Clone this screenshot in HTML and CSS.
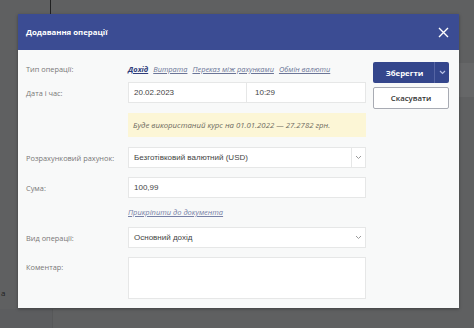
FILE: index.html
```html
<!DOCTYPE html>
<html>
<head>
  <title>Додавання операції</title>
  <link rel="stylesheet" href="styles.css">
</head>
<body>
  <div class="page">
    <div class="page-line"></div>
    <div class="page-band"></div>
    <div class="page-side"></div>
    <span class="page-text">а</span>
  </div>

  <div class="modal">
    <div class="modal-head">
      <span class="modal-title">Додавання операції</span>
      <svg class="close" width="11" height="11" viewBox="0 0 11 11"><path d="M1 1L10 10M10 1L1 10" stroke="#fff" stroke-width="1.4" fill="none"/></svg>
    </div>
    <div class="modal-body">
      <div class="form">
        <div class="row row-type">
          <label>Тип операції:</label>
          <div class="types">
            <a class="active">Дохід</a>
            <a>Витрата</a>
            <a>Переказ між рахунками</a>
            <a>Обмін валюти</a>
          </div>
        </div>

        <div class="row">
          <label>Дата і час:</label>
          <div class="field split">
            <span class="date">20.02.2023</span>
            <span class="time">10:29</span>
          </div>
        </div>

        <div class="notice">Буде використаний курс на 01.01.2022 — 27.2782 грн.</div>

        <div class="row">
          <label>Розрахунковий рахунок:</label>
          <div class="field select">
            <span class="value">Безготівковий валютний (USD)</span>
            <span class="arrow divided"><svg width="7" height="5" viewBox="0 0 7 5"><path d="M1 1l2.5 2.5L6 1" stroke="#9a9a9a" fill="none"/></svg></span>
          </div>
        </div>

        <div class="row row-sum">
          <label>Сума:</label>
          <div class="field"><span class="value">100,99</span></div>
        </div>

        <div class="row row-link">
          <label></label>
          <a class="attach">Прикріпити до документа</a>
        </div>

        <div class="row">
          <label>Вид операції:</label>
          <div class="field select">
            <span class="value">Основний дохід</span>
            <span class="arrow"><svg width="7" height="5" viewBox="0 0 7 5"><path d="M1 1l2.5 2.5L6 1" stroke="#9a9a9a" fill="none"/></svg></span>
          </div>
        </div>

        <div class="row row-comment">
          <label>Коментар:</label>
          <div class="field area"></div>
        </div>
      </div>

      <div class="actions">
        <div class="btn-save">
          <span class="save-label">Зберегти</span>
          <span class="save-more"><svg width="7" height="5" viewBox="0 0 7 5"><path d="M1 1l2.5 2.5L6 1" stroke="#b7c0e4" stroke-width="1.2" fill="none"/></svg></span>
        </div>
        <div class="btn-cancel">Скасувати</div>
      </div>
    </div>
  </div>
</body>
</html>
```

FILE: styles.css
```css
body { margin: 0; width: 474px; height: 328px; overflow: hidden; background: #5f6061; font-family: "Open Sans", sans-serif; position: relative; }

.page { position: absolute; inset: 0; }
.page-line { position: absolute; left: 50px; top: 0; width: 1px; height: 14px; background: #1f2021; }
.page-band { position: absolute; right: 0; top: 63px; width: 15px; height: 34px; background: #666768; }
.page-side { position: absolute; left: 0; top: 309px; width: 52px; height: 19px; background: #5c5d5f; border-right: 1px solid #575859; }
.page-text { position: absolute; left: 1px; top: 288px; color: #222; font-size: 8px; line-height: 10px; }

.modal { position: absolute; left: 18px; top: 14px; width: 441px; height: 294px; background: #f8f9f9; box-shadow: 0 1px 3px rgba(0,0,0,0.35); display: flex; flex-direction: column; }

.modal-head { height: 36px; background: #3b4c93; display: flex; align-items: center; justify-content: space-between; padding: 0 10px 0 8px; }
.modal-title { color: #fff; font-size: 7.8px; font-weight: 700; }
.close { display: block; }

.modal-body { display: flex; padding: 12px 10px 0 8px; gap: 7px; }
.form { width: 340px; display: flex; flex-direction: column; }

.row { display: flex; align-items: center; }
.row label { width: 102px; flex: none; font-size: 7.4px; color: #787878; }
.row-type { height: 14px; margin-bottom: 6px; }
.row-sum { margin-top: 9px; }
.row-link { height: 14px; margin-top: 7px; margin-bottom: 8px; }
.row-comment { align-items: flex-start; margin-top: 9px; }
.row-comment label { padding-top: 5px; }

.types { display: flex; gap: 5px; font-size: 7.4px; font-style: italic; }
.types a { color: #6b7597; text-decoration: underline; }
.types a.active { color: #2e3c7a; font-weight: 700; }

.field { flex: 1; height: 21px; background: #fff; border: 1px solid #e6e7e7; box-sizing: border-box; display: flex; align-items: center; font-size: 8px; color: #444; font-family: "Liberation Sans", sans-serif; }
.field .value { padding-left: 5px; flex: 1; }
.split .date { width: 112px; padding-left: 5px; height: 100%; display: flex; align-items: center; border-right: 1px solid #e6e7e7; }
.split .time { padding-left: 8px; }
.select .arrow { width: 13px; height: 100%; display: flex; align-items: center; justify-content: center; }
.select .divided { border-left: 1px solid #e6e7e7; }
.area { height: 42px; }

.notice { margin: 10px 0 10px 102px; height: 24px; background: #fcf6d6; display: flex; align-items: center; padding-left: 5px; font-size: 7.8px; font-style: italic; color: #6c6a60; }

.attach { font-size: 7.5px; font-style: italic; color: #7680a6; text-decoration: underline; }

.actions { width: 76px; display: flex; flex-direction: column; gap: 4px; }
.btn-save { height: 21px; background: #34468c; border-radius: 2px; display: flex; color: #fff; font-size: 7.8px; font-weight: 700; }
.save-label { flex: 1; display: flex; align-items: center; justify-content: center; padding-left: 2px; }
.save-more { width: 14px; border-left: 1px solid #5564a3; display: flex; align-items: center; justify-content: center; }
.btn-cancel { height: 22px; box-sizing: border-box; background: #fff; border: 1px solid #a8abb3; border-radius: 2px; display: flex; align-items: center; justify-content: center; font-size: 7.8px; font-weight: 600; color: #333; }
```
